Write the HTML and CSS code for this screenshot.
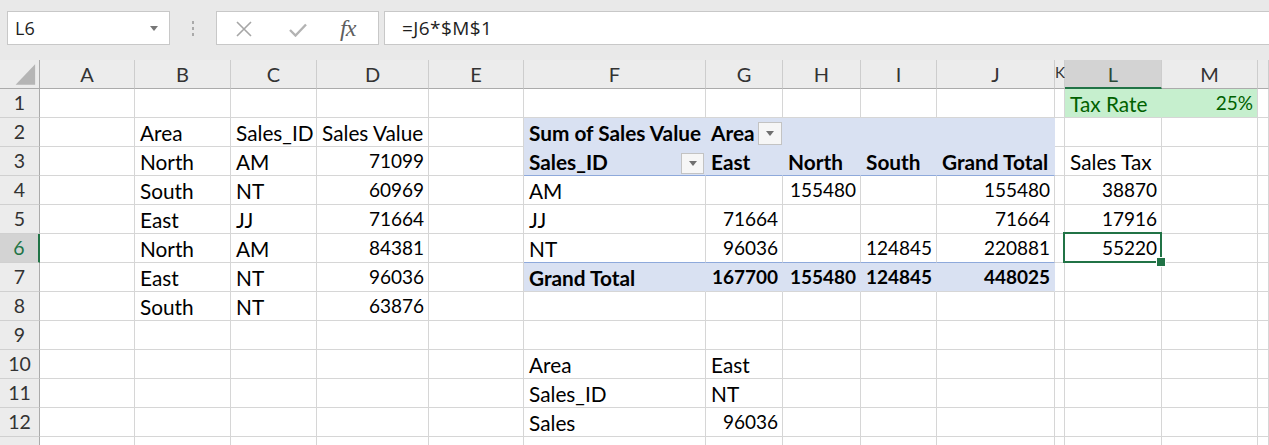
FILE: index.html
```html
<!DOCTYPE html>
<html>
<head>
<meta charset="utf-8">
<link rel="stylesheet" href="styles.css">
</head>
<body>
<div class="app">
  <div class="toolbar">
    <div class="namebox"><span>L6</span><svg class="caret" width="8" height="5" viewBox="0 0 8 5"><path d="M0 0H8L4 5Z" fill="#777"/></svg></div>
    <div class="grip"><svg width="4" height="16" viewBox="0 0 4 16"><rect x="1" y="1" width="2" height="3" fill="#aaa"/><rect x="1" y="7" width="2" height="3" fill="#aaa"/><rect x="1" y="13" width="2" height="3" fill="#aaa"/></svg></div>
    <div class="fxbox">
      <svg class="ic-x" width="16" height="16" viewBox="0 0 16 16"><path d="M1 1L15 15M15 1L1 15" stroke="#a6a6a6" stroke-width="1.6" fill="none"/></svg>
      <svg class="ic-ok" width="18" height="14" viewBox="0 0 18 14"><path d="M1 7L6.5 12.5L17 1.5" stroke="#b3b3b3" stroke-width="2.4" fill="none"/></svg>
      <span class="fx">fx</span>
    </div>
    <div class="formula">=J6*$M$1</div>
  </div>
  <div class="sheet">
    <!-- header -->
    <div class="c corner"><svg width="40" height="29" viewBox="0 0 40 29"><path d="M36 5V26H16Z" fill="#b5b5b5"/></svg></div>
    <div class="c h">A</div><div class="c h">B</div><div class="c h">C</div><div class="c h">D</div><div class="c h">E</div><div class="c h">F</div><div class="c h">G</div><div class="c h">H</div><div class="c h">I</div><div class="c h">J</div><div class="c h hk">K</div><div class="c h selc">L</div><div class="c h">M</div><div class="c h"></div>
    <!-- row 1 -->
    <div class="c rh">1</div>
    <div class="c"></div><div class="c"></div><div class="c"></div><div class="c"></div><div class="c"></div><div class="c"></div><div class="c"></div><div class="c"></div><div class="c"></div><div class="c"></div><div class="c"></div>
    <div class="c g gl">Tax Rate</div><div class="c g r">25%</div><div class="c"></div>
    <!-- row 2 -->
    <div class="c rh">2</div>
    <div class="c"></div><div class="c">Area</div><div class="c">Sales_ID</div><div class="c">Sales Value</div><div class="c"></div>
    <div class="c pv p2 b">Sum of Sales Value</div>
    <div class="c pv p2 b">Area<span class="btn"><svg width="8" height="5" viewBox="0 0 8 5"><path d="M0 0H8L4 5Z" fill="#6f6f6f"/></svg></span></div>
    <div class="c pv p2"></div><div class="c pv p2"></div><div class="c pv p2"></div>
    <div class="c"></div><div class="c"></div><div class="c"></div><div class="c"></div>
    <!-- row 3 -->
    <div class="c rh">3</div>
    <div class="c"></div><div class="c">North</div><div class="c">AM</div><div class="c r">71099</div><div class="c"></div>
    <div class="c pv pl b">Sales_ID<span class="btn btn2"><svg width="8" height="5" viewBox="0 0 8 5"><path d="M0 0H8L4 5Z" fill="#6f6f6f"/></svg></span></div>
    <div class="c pv pl b">East</div><div class="c pv pl b">North</div><div class="c pv pl b">South</div><div class="c pv pl b">Grand Total</div>
    <div class="c"></div><div class="c">Sales Tax</div><div class="c"></div><div class="c"></div>
    <!-- row 4 -->
    <div class="c rh">4</div>
    <div class="c"></div><div class="c">South</div><div class="c">NT</div><div class="c r">60969</div><div class="c"></div>
    <div class="c">AM</div><div class="c"></div><div class="c r">155480</div><div class="c"></div><div class="c r">155480</div>
    <div class="c"></div><div class="c r">38870</div><div class="c"></div><div class="c"></div>
    <!-- row 5 -->
    <div class="c rh">5</div>
    <div class="c"></div><div class="c">East</div><div class="c">JJ</div><div class="c r">71664</div><div class="c"></div>
    <div class="c">JJ</div><div class="c r">71664</div><div class="c"></div><div class="c"></div><div class="c r">71664</div>
    <div class="c"></div><div class="c r">17916</div><div class="c"></div><div class="c"></div>
    <!-- row 6 -->
    <div class="c rh selr">6</div>
    <div class="c"></div><div class="c">North</div><div class="c">AM</div><div class="c r">84381</div><div class="c"></div>
    <div class="c pl">NT</div><div class="c r pl">96036</div><div class="c pl"></div><div class="c r pl">124845</div><div class="c r pl">220881</div>
    <div class="c"></div><div class="c r sel">55220</div><div class="c"></div><div class="c"></div>
    <!-- row 7 -->
    <div class="c rh">7</div>
    <div class="c"></div><div class="c">East</div><div class="c">NT</div><div class="c r">96036</div><div class="c"></div>
    <div class="c pv b">Grand Total</div><div class="c pv b r">167700</div><div class="c pv b r">155480</div><div class="c pv b r">124845</div><div class="c pv b r">448025</div>
    <div class="c"></div><div class="c"></div><div class="c"></div><div class="c"></div>
    <!-- row 8 -->
    <div class="c rh">8</div>
    <div class="c"></div><div class="c">South</div><div class="c">NT</div><div class="c r">63876</div><div class="c"></div>
    <div class="c"></div><div class="c"></div><div class="c"></div><div class="c"></div><div class="c"></div>
    <div class="c"></div><div class="c"></div><div class="c"></div><div class="c"></div>
    <!-- row 9 -->
    <div class="c rh">9</div>
    <div class="c"></div><div class="c"></div><div class="c"></div><div class="c"></div><div class="c"></div>
    <div class="c"></div><div class="c"></div><div class="c"></div><div class="c"></div><div class="c"></div>
    <div class="c"></div><div class="c"></div><div class="c"></div><div class="c"></div>
    <!-- row 10 -->
    <div class="c rh">10</div>
    <div class="c"></div><div class="c"></div><div class="c"></div><div class="c"></div><div class="c"></div>
    <div class="c">Area</div><div class="c">East</div><div class="c"></div><div class="c"></div><div class="c"></div>
    <div class="c"></div><div class="c"></div><div class="c"></div><div class="c"></div>
    <!-- row 11 -->
    <div class="c rh">11</div>
    <div class="c"></div><div class="c"></div><div class="c"></div><div class="c"></div><div class="c"></div>
    <div class="c">Sales_ID</div><div class="c">NT</div><div class="c"></div><div class="c"></div><div class="c"></div>
    <div class="c"></div><div class="c"></div><div class="c"></div><div class="c"></div>
    <!-- row 12 -->
    <div class="c rh">12</div>
    <div class="c"></div><div class="c"></div><div class="c"></div><div class="c"></div><div class="c"></div>
    <div class="c">Sales</div><div class="c r">96036</div><div class="c"></div><div class="c"></div><div class="c"></div>
    <div class="c"></div><div class="c"></div><div class="c"></div><div class="c"></div>
    <!-- row 13 (partly visible) -->
    <div class="c rh"></div>
    <div class="c"></div><div class="c"></div><div class="c"></div><div class="c"></div><div class="c"></div>
    <div class="c"></div><div class="c"></div><div class="c"></div><div class="c"></div><div class="c"></div>
    <div class="c"></div><div class="c"></div><div class="c"></div><div class="c"></div>
  </div>
</div>
</body>
</html>
```
FILE: styles.css
```css
* { box-sizing: border-box; }
html, body { margin: 0; height: 100%; overflow: hidden; }
body { background: #e9e9e9; font-family: Lato, "Open Sans", sans-serif; }

.toolbar {
  height: 60px;
  display: flex;
  align-items: flex-start;
  padding: 11px 0 0 7px;
}
.namebox {
  width: 163px;
  height: 34px;
  background: #fff;
  border: 1px solid #c8c8c8;
  display: flex;
  align-items: center;
  justify-content: space-between;
  padding: 0 11px 0 7px;
  font-family: "Open Sans", sans-serif;
  font-size: 18px;
  color: #1e1e1e;
}
.grip {
  width: 46px;
  height: 34px;
  display: flex;
  align-items: center;
  justify-content: center;
}
.fxbox {
  width: 163px;
  height: 34px;
  background: #fff;
  border: 1px solid #c8c8c8;
  display: flex;
  align-items: center;
  padding-left: 19px;
}
.ic-x { margin-top: 1px; }
.ic-ok { margin-left: 37px; margin-top: 3px; }
.fx {
  margin-left: 33px;
  font-family: "Liberation Serif", serif;
  font-style: italic;
  font-size: 24px;
  color: #5e5e5e;
  letter-spacing: -1px;
}
.formula {
  flex: 1;
  margin-left: 5px;
  height: 34px;
  background: #fff;
  border: 1px solid #c8c8c8;
  border-right: none;
  display: flex;
  align-items: center;
  padding-left: 17px;
  font-family: "Open Sans", sans-serif;
  font-size: 19px;
  letter-spacing: 0.4px;
  color: #1e1e1e;
}

.sheet {
  display: grid;
  grid-template-columns: 40px 95px 96px 86px 112px 95px 182px 77px 78px 76px 118px 10px 97px 96px 1fr;
  grid-auto-rows: 29px;
  background: #fff;
}
.c {
  position: relative;
  border-right: 1px solid #d6d6d6;
  border-bottom: 1px solid #d6d6d6;
  display: flex;
  align-items: flex-end;
  padding: 0 4px 2px 5px;
  font-size: 20.8px;
  line-height: 22px;
  color: #000;
  white-space: nowrap;
  overflow: visible;
}
.r { justify-content: flex-end; font-size: 19px; padding-bottom: 3px; }
.b { font-weight: 700; }

.h {
  background: #ececec;
  border-right-color: #cdcdcd;
  border-bottom-color: #ababab;
  justify-content: center;
  color: #333;
  padding: 0 0 3px 0;
  font-size: 20px;
}
.hk { justify-content: flex-start; padding-left: 0; font-size: 15px; padding-bottom: 5px; }
.corner {
  background: #ececec;
  border-right-color: #ababab;
  border-bottom-color: #ababab;
  padding: 0;
}
.corner svg { display: block; }
.rh {
  background: #ececec;
  border-right-color: #ababab;
  border-bottom-color: #d0d0d0;
  justify-content: center;
  color: #333;
  padding: 0 0 3px 0;
  font-size: 19.5px;
}
.selc {
  background: #d3d3d3;
  border-bottom: 2px solid #217346;
  color: #2b4a39;
  padding-bottom: 2px;
}
.selr {
  background: #d3d3d3;
  border-right: 2px solid #217346;
  color: #217346;
}

.g { background: #c6efce; color: #006100; }
.gl { border-right-color: #c6efce; }

.pv { background: #d9e1f2; border-right-color: #d9e1f2; }
.p2 { border-bottom-color: #d9e1f2; }
.pl { border-bottom-color: #8ea9db; }

.btn {
  position: absolute;
  right: 0;
  bottom: 1px;
  width: 24px;
  height: 23px;
  background: #f6f6f6;
  border: 1px solid #c3c3c3;
  display: flex;
  align-items: center;
  justify-content: center;
}
.btn2 { right: 1px; bottom: 1px; height: 21px; width: 23px; }

.sel { z-index: 2; }
.sel::after {
  content: "";
  position: absolute;
  left: -2px;
  top: -2px;
  right: -1px;
  bottom: -1px;
  border: 2px solid #217346;
}
.sel::before {
  content: "";
  position: absolute;
  right: -5px;
  bottom: -5px;
  width: 8px;
  height: 8px;
  background: #217346;
  border: 1px solid #fff;
  z-index: 3;
}
```
